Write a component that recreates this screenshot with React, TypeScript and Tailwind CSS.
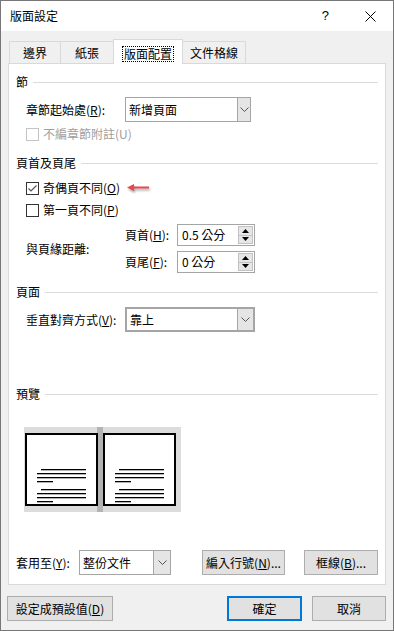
import { ReactNode } from "react";

function U({ c }: { c: string }) {
  return <span className="underline underline-offset-[1px]">{c}</span>;
}

function Chevron() {
  return (
    <svg width="9" height="5" viewBox="0 0 9 5">
      <path d="M0.5 0.5 L4.5 4.5 L8.5 0.5" fill="none" stroke="#555" strokeWidth="1" />
    </svg>
  );
}

function Section({ title }: { title: string }) {
  return (
    <div className="flex items-center gap-[5px] h-4">
      <span className="leading-4">{title}</span>
      <div className="h-px flex-1 bg-[#dcdcdc]" />
    </div>
  );
}

function Check({ checked, disabled, children }: { checked?: boolean; disabled?: boolean; children: ReactNode }) {
  return (
    <div className="flex items-center h-4 pl-[10px]">
      <div
        className={
          "w-[13px] h-[13px] border bg-white flex items-center justify-center " +
          (disabled ? "border-[#c4c4c4]" : "border-[#333333]")
        }
      >
        {checked && (
          <svg width="11" height="11" viewBox="0 0 11 11">
            <path d="M1.5 5.5 L4 8 L9.5 2.5" fill="none" stroke="#555" strokeWidth="1.2" />
          </svg>
        )}
      </div>
      <span className={"ml-[4px] leading-4 " + (disabled ? "text-[#a0a0a0]" : "")}>{children}</span>
    </div>
  );
}

function Spin({ value }: { value: string }) {
  return (
    <div className="flex w-[78px] h-[22px] border border-[#a5a5a5] bg-white">
      <span className="flex-1 pl-[4px] leading-[20px]">{value}</span>
      <div className="flex flex-col w-[16px] py-px pr-px">
        <div className="flex-1 border border-[#c2c2c2] bg-[#e6e6e6] flex items-center justify-center">
          <svg width="7" height="4" viewBox="0 0 7 4"><path d="M0 4 L3.5 0 L7 4 Z" fill="#000" /></svg>
        </div>
        <div className="flex-1 border border-t-0 border-[#c2c2c2] bg-[#e6e6e6] flex items-center justify-center">
          <svg width="7" height="4" viewBox="0 0 7 4"><path d="M0 0 L3.5 4 L7 0 Z" fill="#000" /></svg>
        </div>
      </div>
    </div>
  );
}

function Btn({ children, className }: { children: ReactNode; className: string }) {
  return (
    <button className={"h-[25px] bg-[#e1e1e1] flex items-center justify-center leading-4 " + className}>
      {children}
    </button>
  );
}

function Preview() {
  const ys = [42, 46, 50, 54, 62, 66, 70, 74];
  const lines = (off: number) =>
    ys.map((y, i) => {
      const first = i % 4 === 0;
      const last = i % 4 === 3;
      const x1 = off + (first ? 17 : 13);
      const x2 = off + (last ? 29 : 62);
      return <rect key={off + "-" + i} x={x1} y={y} width={x2 - x1} height={1.3} fill="#000" />;
    });
  return (
    <svg width="157" height="85" viewBox="0 0 157 85">
      <rect x="0" y="0" width="157" height="85" fill="#dcdcdc" />
      <rect x="73" y="0" width="6" height="85" fill="#b3b3b3" />
      <rect x="2" y="7" width="71" height="71" fill="#fff" stroke="#000" strokeWidth="2" />
      <rect x="80" y="7" width="71" height="71" fill="#fff" stroke="#000" strokeWidth="2" />
      {lines(0)}
      {lines(78)}
    </svg>
  );
}

export default function App() {
  return (
    <div className="w-[394px] h-[631px] border border-[#777777] bg-[#f0f0f0] flex flex-col text-[12px] text-black font-['Noto_Sans_CJK_TC',sans-serif]">
      {/* title bar */}
      <div className="h-[30px] bg-white flex items-center pl-[9px] shrink-0">
        <span className="text-[12px] leading-4">版面設定</span>
        <span className="ml-auto text-[13px] font-['Liberation_Sans',sans-serif] leading-4">?</span>
        <svg className="ml-[36px] mr-[17px]" width="11" height="11" viewBox="0 0 11 11">
          <path d="M0.5 0.5 L10.5 10.5 M10.5 0.5 L0.5 10.5" stroke="#000" strokeWidth="1" />
        </svg>
      </div>

      <div className="flex-1 flex flex-col px-[7px] pt-[8px]">
        {/* tabs */}
        <div className="flex items-end ml-px -mb-px h-[25px]">
          <div className="w-[51px] h-[22px] mb-px border-l border-t border-[#d9d9d9] flex items-center justify-center">邊界</div>
          <div className="w-[53px] h-[22px] mb-px border-l border-t border-[#d9d9d9] flex items-center justify-center">紙張</div>
          <div className="relative z-10 w-[70px] h-[25px] border-l border-t border-r border-[#d9d9d9] bg-white flex items-start justify-center pt-[6px]">
            <span className="border border-dotted border-black px-[1px] leading-[14px]">版面配置</span>
          </div>
          <div className="w-[63px] h-[22px] mb-px border-t border-r border-[#d9d9d9] flex items-center justify-center">文件格線</div>
        </div>

        {/* panel */}
        <div className="h-[522px] border border-[#d9d9d9] bg-white px-[7px] pt-[10px] flex flex-col">
          <Section title="節" />
          <div className="flex items-center pl-[10px] mt-[7px]">
            <span className="w-[99px] leading-4">章節起始處(<U c="R" />):</span>
            <div className="flex w-[126px] h-[25px] border border-[#a5a5a5] bg-white">
              <span className="flex-1 pl-[3px] leading-[23px]">新增頁面</span>
              <div className="w-[13px] border-l border-[#a5a5a5] bg-[#e5e5e5] flex items-center justify-center">
                <Chevron />
              </div>
            </div>
          </div>
          <div className="mt-[4px]">
            <Check disabled>不編章節附註(U)</Check>
          </div>

          <div className="mt-[13px]">
            <Section title="頁首及頁尾" />
          </div>
          <div className="mt-[9px] flex items-center">
            <Check checked>奇偶頁不同(<U c="O" />)</Check>
            <svg className="ml-[7px] drop-shadow-[1px_2px_1px_rgba(0,0,0,0.35)]" width="24" height="10" viewBox="0 0 24 10">
              <path d="M0 4.5 L7 1 L7 8 Z" fill="#e8474c" />
              <rect x="6" y="3.5" width="16" height="2" fill="#e8474c" />
            </svg>
          </div>
          <div className="mt-[6px]">
            <Check>第一頁不同(<U c="P" />)</Check>
          </div>
          <div className="flex items-center pl-[10px] mt-[6px]">
            <span className="w-[99px] leading-4">與頁緣距離:</span>
            <div className="flex flex-col gap-[5px]">
              <div className="flex items-center">
                <span className="w-[52px] leading-4">頁首(<U c="H" />):</span>
                <Spin value="0.5 公分" />
              </div>
              <div className="flex items-center">
                <span className="w-[52px] leading-4">頁尾(<U c="F" />):</span>
                <Spin value="0 公分" />
              </div>
            </div>
          </div>

          <div className="mt-[11px]">
            <Section title="頁面" />
          </div>
          <div className="flex items-center pl-[10px] mt-[7px]">
            <span className="w-[99px] leading-4">垂直對齊方式(<U c="V" />):</span>
            <div className="flex w-[130px] h-[25px] border-2 border-[#a5a5a5] bg-white">
              <span className="flex-1 pl-[3px] leading-[21px]">靠上</span>
              <div className="w-[16px] border-l border-[#a5a5a5] bg-[#e5e5e5] flex items-center justify-center">
                <Chevron />
              </div>
            </div>
          </div>

          <div className="mt-[54px]">
            <Section title="預覽" />
          </div>
          <div className="mt-[25px] ml-[8px] flex">
            <Preview />
          </div>

          <div className="mt-[38px] flex items-center">
            <span className="w-[63px] leading-4">套用至(<U c="Y" />):</span>
            <div className="flex w-[92px] h-[25px] border border-[#a5a5a5] bg-white">
              <span className="flex-1 pl-[3px] leading-[23px]">整份文件</span>
              <div className="w-[17px] border-l border-[#a5a5a5] bg-[#e5e5e5] flex items-center justify-center">
                <Chevron />
              </div>
            </div>
            <div className="ml-auto flex gap-[19px]">
              <Btn className="w-[83px] border border-[#adadad]">編入行號(<U c="N" />)...</Btn>
              <Btn className="w-[74px] border border-[#adadad]">框線(<U c="B" />)...</Btn>
            </div>
          </div>
        </div>

        {/* bottom buttons */}
        <div className="mt-[11px] flex items-center -ml-px">
          <Btn className="w-[106px] border border-[#adadad]">設定成預設值(<U c="D" />)</Btn>
          <div className="ml-auto flex gap-[10px]">
            <Btn className="w-[75px] border-2 border-[#0078d7]">確定</Btn>
            <Btn className="w-[74px] border border-[#adadad]">取消</Btn>
          </div>
        </div>
      </div>
    </div>
  );
}
